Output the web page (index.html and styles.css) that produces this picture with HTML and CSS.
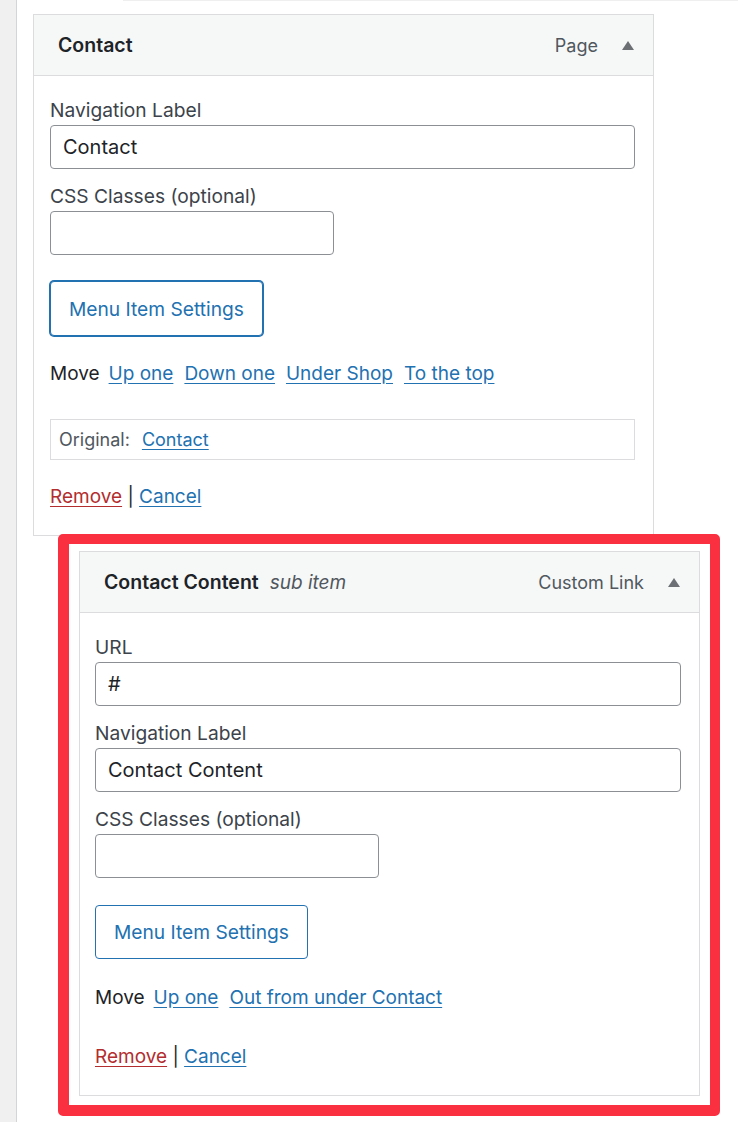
FILE: index.html
```html
<!DOCTYPE html>
<html>
<head>
<meta charset="utf-8">
<link rel="stylesheet" href="styles.css">
</head>
<body>
<div class="page">
  <div class="sidebar"></div>
  <div class="main">
    <div class="topline"></div>

    <div class="menu-item first">
      <div class="item-bar">
        <span class="item-title">Contact</span>
        <span class="item-controls">
          <span class="item-type">Page</span>
          <svg class="arrow" width="12" height="9" viewBox="0 0 12 9"><polygon points="6,0 12,9 0,9" fill="#6c7075"/></svg>
        </span>
      </div>
      <div class="item-settings">
        <label class="field-label">Navigation Label</label>
        <input class="text-input" type="text" value="Contact">
        <label class="field-label spaced">CSS Classes (optional)</label>
        <input class="text-input short" type="text" value="">
        <button class="settings-btn focused">Menu Item Settings</button>
        <div class="move-row first-move">
          <span class="move-label">Move</span>
          <a href="#">Up one</a>
          <a href="#">Down one</a>
          <a href="#">Under Shop</a>
          <a href="#">To the top</a>
        </div>
        <div class="original">
          <span>Original:</span><a href="#">Contact</a>
        </div>
        <div class="actions">
          <a href="#" class="remove">Remove</a> | <a href="#">Cancel</a>
        </div>
      </div>
    </div>

    <div class="highlight">
      <div class="menu-item">
        <div class="item-bar">
          <span class="item-title">Contact Content <em class="sub">sub item</em></span>
          <span class="item-controls">
            <span class="item-type">Custom Link</span>
            <svg class="arrow" width="12" height="9" viewBox="0 0 12 9"><polygon points="6,0 12,9 0,9" fill="#6c7075"/></svg>
          </span>
        </div>
        <div class="item-settings">
          <label class="field-label">URL</label>
          <input class="text-input" type="text" value="#">
          <label class="field-label spaced">Navigation Label</label>
          <input class="text-input" type="text" value="Contact Content">
          <label class="field-label spaced">CSS Classes (optional)</label>
          <input class="text-input short" type="text" value="">
          <button class="settings-btn">Menu Item Settings</button>
          <div class="move-row">
            <span class="move-label">Move</span>
            <a href="#">Up one</a>
            <a href="#">Out from under Contact</a>
          </div>
          <div class="actions wide-gap">
            <a href="#" class="remove">Remove</a> | <a href="#">Cancel</a>
          </div>
        </div>
      </div>
    </div>
  </div>
</div>
</body>
</html>
```

FILE: styles.css
```css
* { box-sizing: border-box; }
html, body {
  margin: 0;
  padding: 0;
  background: #fff;
}
body {
  font-family: Inter, "Noto Sans", "Liberation Sans", sans-serif;
  font-size: 19px;
  color: #1d2327;
}
.page {
  display: flex;
  min-height: 1122px;
}
.sidebar {
  width: 17px;
  flex: none;
  background: #f0f0f1;
  border-right: 1px solid #d4d5d8;
}
.main {
  flex: 1;
  display: flex;
  flex-direction: column;
}
.topline {
  height: 1px;
  margin-left: 106px;
  background: #efefef;
}
.menu-item {
  background: #fff;
  border: 1px solid #dcdcde;
}
.menu-item.first {
  width: 621px;
  margin-left: 16px;
  margin-top: 13px;
}
.item-bar {
  display: flex;
  align-items: center;
  justify-content: space-between;
  height: 61px;
  padding: 0 19px 0 24px;
  background: #f6f7f7;
  border-bottom: 1px solid #dcdcde;
}
.item-title {
  font-weight: 600;
  font-size: 19.5px;
  color: #1d2327;
}
.item-title .sub {
  font-weight: 400;
  font-style: italic;
  font-size: 19px;
  color: #50575e;
  margin-left: 6px;
}
.item-controls {
  display: flex;
  align-items: center;
  gap: 24px;
}
.item-type {
  color: #50575e;
  font-size: 18px;
}
.arrow { display: block; }
.item-settings {
  display: flex;
  flex-direction: column;
  align-items: flex-start;
  padding: 21px 18px 25px 16px;
}
.field-label {
  line-height: 26px;
  font-size: 19.2px;
  color: #3c434a;
}
.field-label.spaced { margin-top: 14px; }
.text-input {
  margin-top: 2px;
  width: 100%;
  height: 44px;
  border: 1px solid #8c8f94;
  border-radius: 4px;
  padding: 0 12px;
  font-family: Inter, "Noto Sans", "Liberation Sans", sans-serif;
  font-size: 20px;
  color: #1d2327;
  background: #fff;
}
.text-input.short { width: 284px; }
.settings-btn {
  margin-top: 27px;
  height: 54px;
  padding: 0 18px;
  background: #fff;
  border: 1px solid #2271b1;
  border-radius: 4px;
  color: #2271b1;
  font-family: Inter, "Noto Sans", "Liberation Sans", sans-serif;
  font-size: 19.2px;
}
.settings-btn.focused {
  margin-top: 26px;
  height: 55px;
  box-shadow: 0 0 0 1px #2271b1;
}
a {
  color: #2271b1;
  text-decoration: underline;
  text-underline-offset: 3px;
}
.move-row {
  margin-top: 26px;
  display: flex;
  gap: 11px;
  line-height: 26px;
}
.move-row.first-move { margin-top: 25px; }
.move-label { margin-right: -2px; }
.original {
  margin-top: 32px;
  width: 100%;
  height: 41px;
  border: 1px solid #dcdcde;
  padding: 0 8px;
  display: flex;
  align-items: center;
  gap: 12px;
  color: #50575e;
  font-size: 18px;
}
.actions {
  margin-top: 24px;
  line-height: 26px;
  color: #1d2327;
}
.actions.wide-gap { margin-top: 33px; }
.actions .remove { color: #b32d2e; }
.highlight {
  margin-left: 41px;
  margin-top: -2px;
  width: 662px;
  border: 10px solid #fa3040;
  border-left-width: 11px;
  border-bottom-width: 11px;
  border-radius: 5px;
  padding: 7px 10px 9px 10px;
  background: #fff;
}
.highlight .item-settings {
  padding-left: 15px;
}
```
